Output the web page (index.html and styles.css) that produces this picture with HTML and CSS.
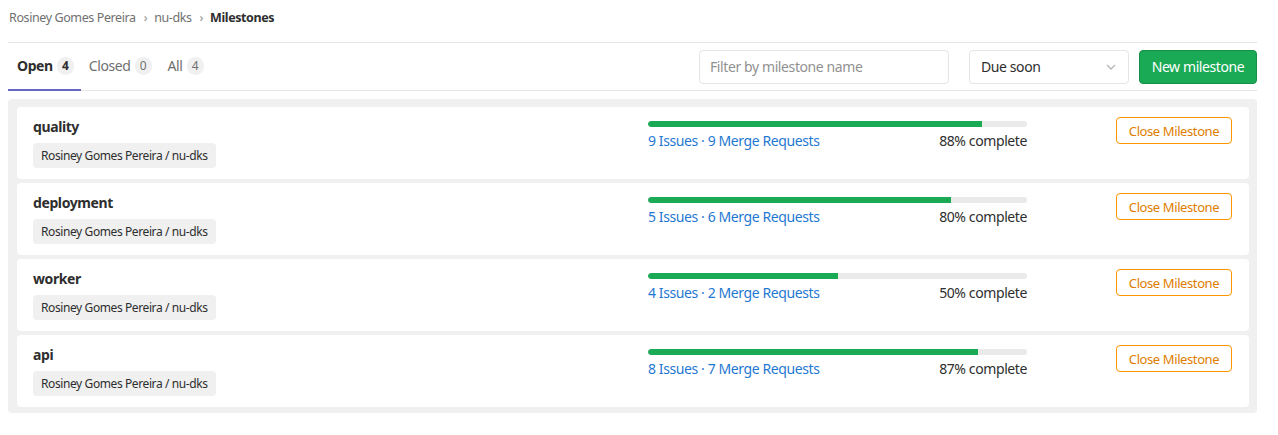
FILE: index.html
```html
<!DOCTYPE html>
<html>
<head>
<meta charset="utf-8">
<link rel="stylesheet" href="styles.css">
</head>
<body>
<div class="page">
  <nav class="crumbs">
    <span class="crumb">Rosiney Gomes Pereira</span>
    <span class="sep">›</span>
    <span class="crumb">nu-dks</span>
    <span class="sep">›</span>
    <span class="crumb current">Milestones</span>
  </nav>
  <div class="topbar">
    <ul class="tabs">
      <li class="tab active">Open <span class="count">4</span></li>
      <li class="tab">Closed <span class="count">0</span></li>
      <li class="tab">All <span class="count">4</span></li>
    </ul>
    <div class="controls">
      <input class="filter" type="text" placeholder="Filter by milestone name">
      <div class="sort">
        <span>Due soon</span>
        <svg width="10" height="6" viewBox="0 0 10 6"><path d="M1 1l4 4 4-4" fill="none" stroke="#b5b5b5" stroke-width="1.3"/></svg>
      </div>
      <button class="btn-new">New milestone</button>
    </div>
  </div>
  <div class="list">
    <div class="card">
      <div class="info">
        <div class="title">quality</div>
        <span class="project">Rosiney Gomes Pereira / nu-dks</span>
      </div>
      <div class="progress">
        <div class="bar"><div class="fill" style="width:88%"></div></div>
        <div class="meta"><a class="links">9 Issues · 9 Merge Requests</a><span>88% complete</span></div>
      </div>
      <div class="actions"><button class="btn-close">Close Milestone</button></div>
    </div>
    <div class="card">
      <div class="info">
        <div class="title">deployment</div>
        <span class="project">Rosiney Gomes Pereira / nu-dks</span>
      </div>
      <div class="progress">
        <div class="bar"><div class="fill" style="width:80%"></div></div>
        <div class="meta"><a class="links">5 Issues · 6 Merge Requests</a><span>80% complete</span></div>
      </div>
      <div class="actions"><button class="btn-close">Close Milestone</button></div>
    </div>
    <div class="card">
      <div class="info">
        <div class="title">worker</div>
        <span class="project">Rosiney Gomes Pereira / nu-dks</span>
      </div>
      <div class="progress">
        <div class="bar"><div class="fill" style="width:50%"></div></div>
        <div class="meta"><a class="links">4 Issues · 2 Merge Requests</a><span>50% complete</span></div>
      </div>
      <div class="actions"><button class="btn-close">Close Milestone</button></div>
    </div>
    <div class="card">
      <div class="info">
        <div class="title">api</div>
        <span class="project">Rosiney Gomes Pereira / nu-dks</span>
      </div>
      <div class="progress">
        <div class="bar"><div class="fill" style="width:87%"></div></div>
        <div class="meta"><a class="links">8 Issues · 7 Merge Requests</a><span>87% complete</span></div>
      </div>
      <div class="actions"><button class="btn-close">Close Milestone</button></div>
    </div>
  </div>
</div>
</body>
</html>
```
FILE: styles.css
```css
* { box-sizing: border-box; }
body {
  margin: 0;
  font-family: "Noto Sans", "Open Sans", sans-serif;
  letter-spacing: -0.025em;
  color: #2e2e2e;
  background: #fff;
}
.page {
  margin: 0 21px 0 8px;
}
.crumbs {
  height: 43px;
  display: flex;
  align-items: center;
  padding-bottom: 7px;
  padding-left: 1px;
  font-size: 12.5px;
  color: #707070;
  border-bottom: 1px solid #e5e5e5;
}
.sep {
  margin: 0 7px 0 8px;
  color: #909090;
}
.current {
  color: #2e2e2e;
  font-weight: bold;
}
.topbar {
  height: 48px;
  display: flex;
  justify-content: space-between;
  align-items: center;
  border-bottom: 1px solid #e5e5e5;
}
.tabs {
  list-style: none;
  margin: 0;
  padding: 0;
  display: flex;
  height: 100%;
}
.tab {
  display: flex;
  align-items: center;
  padding: 0 8px 1px 8px;
  font-size: 14px;
  color: #707070;
  border-bottom: 2px solid transparent;
  margin-bottom: -1px;
}
.tab:first-child {
  padding-left: 9px;
  padding-right: 7px;
}
.tab.active {
  color: #2e2e2e;
  font-weight: bold;
  border-bottom-color: #6666c4;
}
.count {
  display: inline-block;
  margin-left: 4px;
  min-width: 17px;
  height: 18px;
  line-height: 18px;
  padding: 0 5px;
  border-radius: 9px;
  background: #f0f0f0;
  font-size: 12px;
  font-weight: normal;
  color: #707070;
  text-align: center;
}
.tab.active .count {
  color: #2e2e2e;
  font-weight: bold;
}
.controls {
  display: flex;
  align-items: center;
}
.filter {
  width: 250px;
  height: 34px;
  border: 1px solid #e5e5e5;
  border-radius: 4px;
  padding: 0 10px;
  font-family: inherit;
  letter-spacing: inherit;
  font-size: 14px;
  color: #2e2e2e;
  outline: none;
}
.filter::placeholder { color: #919191; }
.sort {
  margin-left: 20px;
  width: 160px;
  height: 34px;
  border: 1px solid #e5e5e5;
  border-radius: 4px;
  padding: 0 12px 0 11px;
  display: flex;
  align-items: center;
  justify-content: space-between;
  font-size: 14px;
}
.btn-new {
  margin-left: 10px;
  width: 118px;
  height: 34px;
  border: 1px solid #168f48;
  border-radius: 4px;
  background: #1aaa55;
  color: #fff;
  font-family: inherit;
  letter-spacing: inherit;
  font-size: 14px;
  padding: 0;
}
.list {
  margin-top: 8px;
  background: #f0f0f0;
  border-radius: 4px;
  padding: 8px 8px 6px 9px;
  display: flex;
  flex-direction: column;
  gap: 4px;
}
.card {
  background: #fff;
  border-radius: 4px;
  padding: 10px 16px 11px 16px;
  display: grid;
  grid-template-columns: 615px 379px 1fr;
  align-items: start;
}
.title {
  font-size: 14px;
  font-weight: bold;
  line-height: 20px;
}
.project {
  display: inline-block;
  margin-top: 6px;
  background: #f0f0f0;
  border-radius: 4px;
  padding: 0 8px;
  height: 25px;
  line-height: 25px;
  font-size: 12px;
  color: #2e2e2e;
}
.progress {
  padding-top: 4px;
}
.bar {
  height: 6px;
  border-radius: 3px;
  background: #eaeaea;
  overflow: hidden;
}
.fill {
  height: 100%;
  background: #1aaa55;
  border-radius: 3px 0 0 3px;
}
.meta {
  display: flex;
  justify-content: space-between;
  margin-top: 4px;
  font-size: 14px;
  line-height: 20px;
}
.links { color: #1f78d1; }
.actions {
  display: flex;
  justify-content: flex-end;
}
.btn-close {
  width: 116px;
  height: 27px;
  margin-right: 1px;
  border: 1px solid #fc9403;
  border-radius: 4px;
  background: #fff;
  color: #de7e00;
  font-family: inherit;
  letter-spacing: inherit;
  font-size: 13px;
  padding: 0;
}
```
